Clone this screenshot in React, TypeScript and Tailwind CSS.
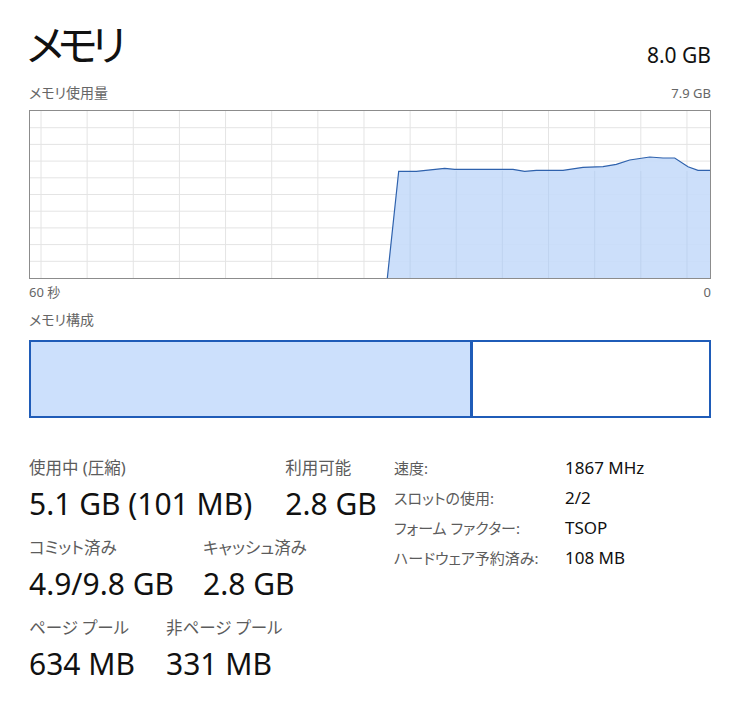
import React from "react";

const pts: [number, number][] = [
  [357.3, 167.3],
  [368.7, 60.3],
  [386.3, 60.3],
  [414.7, 57.3],
  [424.7, 58.3],
  [483, 58.3],
  [494.7, 60.3],
  [506.3, 59.3],
  [533, 59.3],
  [553, 56.3],
  [573, 55.7],
  [586.3, 53.3],
  [599.7, 49],
  [619.7, 46],
  [633, 47],
  [644.7, 47],
  [658, 55.7],
  [668, 59.3],
  [680, 59.3],
];

function Graph() {
  const W = 680;
  const H = 167;
  const vlines = Array.from({ length: 15 }, (_, i) => 11 + i * 46.14);
  const hlines = Array.from({ length: 9 }, (_, i) => (i + 1) * 16.7);
  const line = pts.map((p) => `${p[0]},${p[1]}`).join(" ");
  const area = `${line} ${W},${H} 357.3,${H}`;
  return (
    <div className="h-[169px] border border-[#8c8c8c] bg-white">
      <svg width={W} height={H} viewBox={`0 0 ${W} ${H}`} className="block">
        {vlines.map((x, i) => (
          <line key={"v" + i} x1={x} y1={0} x2={x} y2={H} stroke="#e4e4e4" strokeWidth={1} />
        ))}
        {hlines.map((y, i) => (
          <line key={"h" + i} x1={0} y1={y} x2={W} y2={y} stroke="#e4e4e4" strokeWidth={1} />
        ))}
        <polygon points={area} fill="#c6dcfa" fillOpacity={0.9} />
        {vlines.map((x, i) =>
          x > 360 ? (
            <line key={"v2" + i} x1={x} y1={60} x2={x} y2={H} stroke="#b7cde9" strokeWidth={1} opacity={0.5} />
          ) : null
        )}
        <polyline points={line} fill="none" stroke="#2f62ad" strokeWidth={1.2} />
      </svg>
    </div>
  );
}

function Stat({ label, value }: { label: string; value: string }) {
  return (
    <div className="flex flex-col">
      <div className="text-[16.5px] leading-[22px] text-[#5c5c5c]">{label}</div>
      <div className="mt-[6px] text-[30px] leading-[38px] text-[#111]">{value}</div>
    </div>
  );
}

function Row({ label, value }: { label: string; value: string }) {
  return (
    <div className="flex h-[30px] items-center">
      <div className="w-[171px] text-[15px] text-[#5c5c5c]">{label}</div>
      <div className="text-[17px] text-[#111]">{value}</div>
    </div>
  );
}

export default function App() {
  return (
    <div
      className="w-[746px] h-[715px] bg-white pl-[29px] pr-[35px] pt-[18px] overflow-hidden"
      style={{ fontFamily: "'Noto Sans','Noto Sans CJK JP',sans-serif", fontFeatureSettings: "'palt'" }}
    >
      <div className="flex items-end justify-between">
        <div className="text-[42px] leading-[54px] text-[#111] tracking-[-6px] -ml-[2px]">メモリ</div>
        <div className="text-[21px] leading-[30px] text-[#111] pb-[2px]">8.0 GB</div>
      </div>
      <div className="mt-[11px] flex items-end justify-between text-[#666]">
        <div className="text-[14px] leading-[20px]">メモリ使用量</div>
        <div className="text-[13px] leading-[20px]">7.9 GB</div>
      </div>
      <div className="mt-[7px]">
        <Graph />
      </div>
      <div className="flex justify-between text-[13px] leading-[26px] text-[#666]">
        <div>60 秒</div>
        <div>0</div>
      </div>
      <div className="mt-[5px] text-[14px] leading-[20px] text-[#666]">メモリ構成</div>
      <div className="mt-[10px] flex h-[78px] border-2 border-[#1f5cb8]">
        <div className="w-[442px] bg-[#cce0fc] border-r-[3px] border-[#1f5cb8]" />
        <div className="flex-1 bg-white" />
      </div>
      <div className="mt-[39px] flex">
        <div className="flex flex-col gap-[14px] w-[365px]">
          <div className="flex gap-[33px]">
            <Stat label="使用中 (圧縮)" value="5.1 GB (101 MB)" />
            <Stat label="利用可能" value="2.8 GB" />
          </div>
          <div className="flex gap-[29px]">
            <Stat label="コミット済み" value="4.9/9.8 GB" />
            <Stat label="キャッシュ済み" value="2.8 GB" />
          </div>
          <div className="flex gap-[31px]">
            <Stat label="ページ プール" value="634 MB" />
            <Stat label="非ページ プール" value="331 MB" />
          </div>
        </div>
        <div className="flex flex-col -mt-[4px]">
          <Row label="速度:" value="1867 MHz" />
          <Row label="スロットの使用:" value="2/2" />
          <Row label="フォーム ファクター:" value="TSOP" />
          <Row label="ハードウェア予約済み:" value="108 MB" />
        </div>
      </div>
    </div>
  );
}
